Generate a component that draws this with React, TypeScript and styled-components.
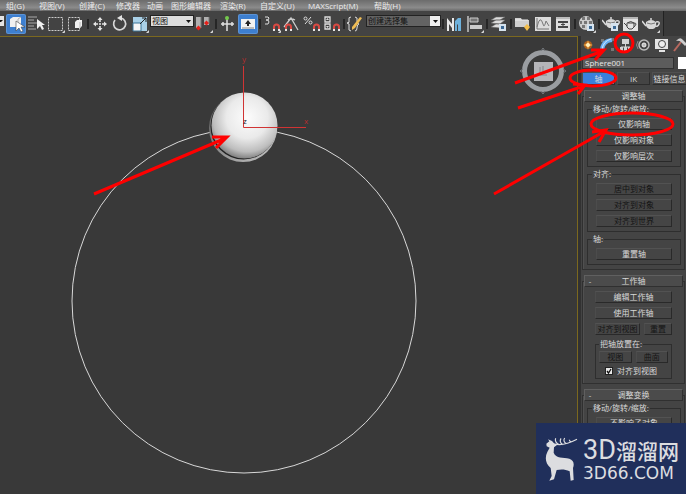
import React from "react";
import styled, { createGlobalStyle } from "styled-components";

const GlobalStyle = createGlobalStyle`
  *, *::before, *::after { box-sizing: border-box; }
  html, body { margin: 0; background: #393939; }
  body, button, input, select {
    font-family: "Open Sans", "Noto Sans CJK SC", sans-serif;
    font-size: 8px;
    line-height: 10px;
    color: #d8d8d8;
  }
  button { cursor: pointer; }
`;

const Page = styled.div`
  position: relative;
  display: flex;
  flex-direction: column;
  height: 100vh;
  overflow: hidden;
`;

const MenuBar = styled.nav`
  display: grid;
  grid-template-columns: 33px 40px 37px 31px 24px 49px 40px 48px 66px auto;
  justify-content: start;
  height: 11px;
  flex: none;
  padding-left: 6px;
  background: linear-gradient(#6c6c6c, #8b8b8b 70%, #686868);
`;

const MenuItem = styled.button`
  padding: 0;
  border: 0;
  background: none;
  color: #ececec;
  text-align: left;
  white-space: nowrap;
`;

const ToolBar = styled.div`
  display: flex;
  align-items: center;
  align-self: flex-start;
  flex: none;
  height: 25px;
  padding-right: 2px;
  background: #434343;
  border-right: 1px solid #222;
`;

const Tool = styled.button<{ $active?: boolean }>`
  display: flex;
  align-items: center;
  justify-content: center;
  width: 20px;
  height: 20px;
  padding: 0;
  border: 0;
  background: none;
  svg {
    border-radius: 1px;
    background: ${(p) => (p.$active ? "#3d7fd0" : "none")};
    box-shadow: ${(p) => (p.$active ? "0 0 0 1px #5b92d4" : "none")};
  }
`;

const Separator = styled.span`
  width: 2px;
  height: 10px;
  margin: 0 1px;
  background: #262626;
`;

const Picker = styled.label<{ $wide?: boolean }>`
  display: flex;
  position: relative;
  width: ${(p) => (p.$wide ? 75 : 44)}px;
  height: 12px;
  margin-bottom: 5px;
  border: 1px solid #222;
  background: ${(p) => (p.$wide ? "#636363" : "#dcdcdc")};
  select {
    appearance: none;
    width: 100%;
    padding: 0 11px 0 1px;
    border: 0;
    background: none;
    color: #111;
  }
  svg { position: absolute; right: 0; top: 0; pointer-events: none; }
`;

const PickerEdge = styled.span`
  display: flex;
  width: 6px;
  height: 12px;
  margin-bottom: 5px;
`;

const Main = styled.main`
  display: flex;
  flex: 1;
  min-height: 0;
`;

const Viewport = styled.section`
  position: relative;
  flex: 1;
  min-width: 0;
  border: solid #7b681f;
  border-width: 1px 1px 0 0;
  background: #393939;
  overflow: hidden;
`;

const Scene = styled.svg`
  display: block;
`;

const ViewCube = styled.svg`
  position: absolute;
  top: 8px;
  right: 8px;
`;

const Panel = styled.aside`
  flex: 0 0 108px;
  padding: 0 0 0 1px;
  border-left: 3px solid #323232;
  background: #444;
  overflow: hidden;
`;

const PanelTabs = styled.div`
  display: flex;
  height: 18px;
  gap: 2px;
`;

const PanelTab = styled.button`
  flex: none;
  width: 16px;
  height: 18px;
  padding: 0;
  border: 0;
  background: none;
`;

const NameRow = styled.div`
  display: flex;
  gap: 4px;
  margin-top: 3px;
  height: 12px;
`;

const NameInput = styled.input`
  width: 92px;
  padding: 0 2px;
  border: 1px solid #303030;
  background: #5c5c5c;
  color: #e8e8e8;
`;

const Swatch = styled.button`
  flex: 1;
  padding: 0;
  border: 0;
  background: #fff;
`;

const SubTabs = styled.div`
  display: grid;
  grid-template-columns: 33px 33px 1fr;
  gap: 2px;
  margin-top: 3px;
`;

const SubTab = styled.button<{ $active?: boolean }>`
  height: 13px;
  padding: 0;
  border: 1px solid;
  border-color: #505050 #2d2d2d #2d2d2d #505050;
  background: ${(p) => (p.$active ? "#3a80db" : "#444")};
  white-space: nowrap;
  &:last-child { border-right: 0; }
`;

const Rollout = styled.section`
  margin: 11px 1px 0 0;
  padding-bottom: 4px;
  border: 1px solid #303030;
  box-shadow: inset 1px 0 #505050;
`;

const RolloutHeader = styled.button`
  display: grid;
  grid-template-columns: 8px 1fr 8px;
  align-items: center;
  width: calc(100% - 2px);
  height: 12px;
  margin: -7px 1px 0;
  padding: 0 1px;
  border: 1px solid;
  border-color: #606060 #303030 #303030 #606060;
  background: #4b4b4b;
`;

const RolloutBody = styled.div<{ $inset?: boolean }>`
  display: flex;
  flex-direction: column;
  gap: ${(p) => (p.$inset ? 4 : 2)}px;
  padding: ${(p) => (p.$inset ? "4px 12px 0" : "2px 3px 0 4px")};
`;

const Group = styled.fieldset<{ $tight?: boolean }>`
  display: flex;
  flex-direction: column;
  gap: ${(p) => (p.$tight ? 3 : 4)}px;
  min-width: 0;
  margin: 0;
  padding: ${(p) => (p.$tight ? "2px 3px" : "4px 8px")};
  border: 1px solid #2e2e2e;
  legend {
    height: 10px;
    margin-left: ${(p) => (p.$tight ? 0 : -4)}px;
    padding: 0 1px;
    white-space: nowrap;
  }
`;

const Row = styled.div`
  display: flex;
  gap: 4px;
`;

const PushButton = styled.button<{ $grow?: number }>`
  display: flex;
  align-items: center;
  justify-content: center;
  flex: ${(p) => (p.$grow ? `${p.$grow} 1 0` : "none")};
  height: 12px;
  padding: 0;
  border: 1px solid;
  border-color: #525252 #292929 #292929 #4c4c4c;
  background: #454545;
  white-space: nowrap;
  &:disabled { color: #141414; }
`;

const Check = styled.label`
  display: flex;
  align-items: center;
  gap: 4px;
  height: 10px;
  padding-left: 6px;
  white-space: nowrap;
  span { position: relative; display: flex; }
  input {
    appearance: none;
    width: 8px;
    height: 8px;
    margin: 0;
    border: 1px solid #222;
    background: #e8e8e8;
  }
  svg { position: absolute; left: 0; top: 0; display: none; pointer-events: none; }
  input:checked + svg { display: block; }
`;

const Annotations = styled.svg`
  position: absolute;
  top: 0;
  right: 0;
  pointer-events: none;
`;

const Brand = styled.div`
  position: absolute;
  right: 0;
  bottom: 0;
  display: flex;
  align-items: center;
  gap: 4px;
  width: 150px;
  height: 71px;
  padding-left: 9px;
  background: #202f5b;
  color: #dcdde0;
`;

const BrandText = styled.div`
  display: flex;
  flex-direction: column;
  white-space: nowrap;
`;

const BrandName = styled.div`
  display: flex;
  align-items: center;
  height: 28px;
  font: 500 21px/28px "Noto Sans CJK SC", sans-serif;
  b { font: 400 27px/28px Roboto, sans-serif; }
`;

const BrandSite = styled.div`
  font: 400 17px/18px "DejaVu Sans", sans-serif;
`;

const menus = ["组(G)", "视图(V)", "创建(C)", "修改器", "动画", "图形编辑器", "渲染(R)", "自定义(U)", "MAXScript(M)", "帮助(H)"];

const Magnet = () => (
  <g fill="none" strokeWidth="2">
    <path d="M12 16v-3a2.5 2.5 0 0 1 5 0v3" stroke="#d84a43" />
    <path d="M12 15v2M17 15v2" stroke="#e6e6e6" />
  </g>
);

const Corner = () => <path d="M19 16v3h-3z" fill="#ddd" />;

const Teapot = () => (
  <>
    <path d="M5 9Q10 5 15 9Q16 15 12 16H8Q4 14 5 9Z" fill="#d9d9d9" />
    <path d="M5 13L1 8M15 9q4-1 3 2t-4 2M9 6h2" fill="none" stroke="#d9d9d9" strokeWidth="1.5" />
    <path d="M6 10q4 2 8 0" stroke="#777" fill="none" />
  </>
);

const icons: Record<string, React.ReactNode> = {
  select: (<><path d="M4 5l3-2h8v8l-3 2H4z" fill="#f0f0f0" /><path d="M12 5v8M12 5l3-2" stroke="#b4b4b4" /><path d="M10 7v10l3-3 2 4 2-1-2-4h4z" fill="#fff" stroke="#444" strokeWidth=".6" /></>),
  byName: (<><path d="M2 3h9M2 6h6M2 9h9M2 12h6M2 15h8" stroke="#aaa" strokeWidth="1.2" /><path d="M11 5v10l3-3 2 4 2-1-2-4h3z" fill="#f1f1f1" /></>),
  region: (<><rect x="2.5" y="3.5" width="14" height="13" fill="none" stroke="#ccc" strokeDasharray="2 1" /><Corner /></>),
  window: (<><rect x="2.5" y="3.5" width="11" height="13" fill="none" stroke="#ccc" strokeDasharray="2 1" /><path d="M9 8l2-2h5v6l-2 2H9z" fill="#f1f1f1" /><path d="M14 8v6" stroke="#bbb" /></>),
  move: (<><path d="M10 4v4M10 12v4M4 10h4M12 10h4M9 10h2" fill="none" stroke="#e4e4e4" strokeWidth="1.6" /><path d="M7.5 6L10 3l2.500 3zM7.500 14l2.500 3 2.500-3zM6 7.500L3 10l3 2.500zM14 7.500l3 2.500-3 2.500z" fill="#e4e4e4" /></>),
  rotate: (<><path d="M5 6a6 6 0 1 0 6-2" fill="none" stroke="#d6d6d6" strokeWidth="1.7" /><path d="M12 1v6L7 4z" fill="#e4e4e4" /></>),
  scale: (<><path d="M3 3h14v14H3z" fill="#a9d0e7" /><path d="M3 9h8v8H3z" fill="#f5f5f5" stroke="#3b7597" /><path d="M10 10l6-6M12 4h4v4" fill="none" stroke="#222" /><Corner /></>),
  pivot: (<><path d="M2 3h5v11H2zM10 3h5v8h-5z" fill="#b0b0b0" /><path d="M7 3v11M15 3v7" stroke="#777" /><path d="M2 14l2.500-2.500L7 14l-2.500 2.500zM10 9l2.500-2.500L15 9l-2.500 2.500z" fill="#e7201a" /><Corner /></>),
  manipulate: (<><path d="M9 5v12M3 10h13M5 8v4M14 8v4" stroke="#e0e0e0" strokeWidth="1.5" /><circle cx="9" cy="4" r="2" fill="#74c94c" /></>),
  keyboard: (<><path d="M3 5h14v10H3z" fill="#f2f2f2" /><path d="M10 6l3 4h-2v2H9v-2H7z" fill="#222" /><path d="M4 14h12" stroke="#888" /></>),
  snap: (<><path d="M3 3h3l1 1-1 2H4h2l1 2-1 2H3" fill="none" stroke="#ddd" /><Magnet /><Corner /></>),
  angle: (<><path d="M2 13L9 4l7 12M6 6a7 7 0 0 1 7 0" fill="none" stroke="#ccc" strokeWidth="1.3" /><g transform="translate(-8 0)"><Magnet /></g></>),
  percent: (<><circle cx="3.5" cy="4.5" r="1.5" fill="none" stroke="#ddd" /><circle cx="8.5" cy="8.5" r="1.5" fill="none" stroke="#ddd" /><path d="M9 3L3 10" stroke="#ddd" /><Magnet /></>),
  spinner: (<><path d="M3 3h5v5H3zM3 10h5v5H3z" fill="none" stroke="#ddd" strokeWidth="1.3" /><path d="M4 6l1.5-2L7 6zM4 12h3l-1.5 2z" fill="#ddd" /><Magnet /></>),
  sets: (<><path d="M5 3q-3 0-2 3t-2 3q3 0 2 4t2 4M9 3q3 0 2 4 0 3 2 3-2 0-2 4 0 3-2 3" fill="none" stroke="#ddd" /><path d="M6 13l8-10 2 1-7 10-3 2z" fill="#efbd55" /></>),
  mirror: (<><path d="M2 4l5 6V4h2v13H7v-3L4 10v7H2z" fill="#e8e8e8" /><path d="M10 17V7l3-3h3v13h-3v-7l-1 1v6z" fill="#6fb2dc" /></>),
  align: (<><path d="M3 2v16" stroke="#d9d9d9" strokeWidth="1.3" /><path d="M5 4h8v4H5z" fill="#777" stroke="#ccc" /><path d="M5 11h12v4H5z" fill="#ccc" /><Corner /></>),
  layers: (<><path d="M2 13l5-3h9l-5 4zM2 9l5-3h9l-5 4zM2 6l5-3h9l-5 3z" fill="#ddd" stroke="#666" strokeWidth=".6" /><path d="M10 10h7v7h-7z" fill="#d6e3ee" /><path d="M12 12h3v3h-3z" fill="#3d6994" /></>),
  ribbon: (<><path d="M2 4h6l1 2h7v7H2z" fill="#cfcfcf" /><path d="M2 6h13" stroke="#eee" /><path d="M11 13l3-3 3 3-3 4z" fill="#f2bd4b" /></>),
  curve: (<><path d="M2 3h16v14H2z" fill="#dcdcdc" /><path d="M4 4v11h12M4 13q3-13 6-3 1 5 3-3l3 5" fill="none" stroke="#777" /></>),
  schematic: (<><path d="M3 3h14v14H3z" fill="#ddd" /><path d="M3 4h14" stroke="#999" /><path d="M5 7h10v2H5zM5 12h10v2H5z" fill="#444" /><path d="M10 8v5M8 10.500h4" fill="none" stroke="#444" /></>),
  material: (<><circle cx="9" cy="9" r="7" fill="#ccc" /><path d="M5 3h3v3H5zM10 3h3v3h-3zM3 7h2v3H3zM7 7h3v3H7zM12 7h3v3h-3zM5 11h3v3H5z" fill="#777" /><path d="M10 10h7v7h-7z" fill="#d6e3ee" /><path d="M12 12h3v3h-3z" fill="#3d6994" /><Corner /></>),
  renderSetup: (<><g transform="translate(0 -2)"><Teapot /></g><path d="M10 9h7v8h-7z" fill="#d6e3ee" /><path d="M12 12h3v3h-3z" fill="#3d6994" /></>),
  frame: (<><path d="M2 3h15v14H2z" fill="#e2e2e2" /><path d="M2 4h15" stroke="#888" /><path d="M6 9q4-3 7 0v4l-2 2H8q-3-1-2-6zM6 12L3 9M13 9q4 0 0 4M7 9h6" fill="none" stroke="#444" /></>),
  render: (<><g transform="translate(0 -1)"><Teapot /></g><Corner /></>),
};

const Icon = ({ name }: { name: string }) => (
  <svg width="18" height="18" viewBox="1 1 18 18" aria-hidden="true">{icons[name]}</svg>
);

const snapGroups: string[][] = [
  ["manipulate", "keyboard"],
  ["snap", "angle", "percent", "spinner"],
];

const renderGroups: string[][] = [
  ["mirror", "align"],
  ["layers"],
  ["ribbon", "curve", "schematic"],
  ["material"],
  ["renderSetup", "frame", "render"],
];

const ToolSet = ({ names, active }: { names: string[]; active?: string }) => (
  <>
    {names.map((n) => (
      <Tool key={n} aria-label={n} $active={n === active}><Icon name={n} /></Tool>
    ))}
  </>
);

const DropArrow = ({ boxed }: { boxed?: boolean }) => (
  <svg width="10" height="10" viewBox="0 0 10 10" aria-hidden="true">
    {boxed && <path d="M0 0h10v10H0z" fill="#eee" />}
    <path d="M3 4h5L5.5 7z" fill="#111" />
  </svg>
);

const panelIcons: [string, React.ReactNode][] = [
  ["Create", <><circle cx="6" cy="9" r="4" fill="#ae611d" /><path d="M6 4l1 4 4 1-4 1-1 4-1-4-4-1 4-1z" fill="#ffbd54" /><circle cx="6" cy="9" r="2" fill="#fff0bc" /></>],
  ["Modify", <><path d="M1 3h3v3H1zM11 2h3v3h-3zM1 12h3v3H1zM11 12h3v3h-3z" fill="#777" /><path d="M2 15Q2 5 12 4" fill="none" stroke="#69b0f3" strokeWidth="4" /><path d="M2 14Q3 5 11 3" fill="none" stroke="#d3eaff" /></>],
  ["Hierarchy", <><path d="M4 3h7v5H4zM2 11h3v4H2zM6 11h3v4H6zM10 11h3v4h-3z" fill="#d2d2d2" /><path d="M7.5 8v4M3 11h9" stroke="#d2d2d2" /></>],
  ["Motion", <><circle cx="8" cy="9" r="5" fill="none" stroke="#bbb" strokeWidth="1.5" /><circle cx="8" cy="9" r="2" fill="#bbb" stroke="#eee" /><path d="M2 5q-3 4 0 8" fill="none" stroke="#888" /></>],
  ["Display", <><path d="M1 3h13v10H1zM5 14h6v2H5z" fill="#e4e4e4" /><circle cx="8" cy="8" r="3.5" fill="#eee" stroke="#444" /></>],
  ["Utilities", <><path d="M2 15L9 6" stroke="#b8685e" strokeWidth="2" /><path d="M4 5q4-5 7-1l4 4-2 2-4-4q-2-2-5-1z" fill="#ccc" /></>],
];

const RolloutBox = ({ title, inset, children }: { title: string; inset?: boolean; children: React.ReactNode }) => (
  <Rollout>
    <RolloutHeader aria-expanded="true"><span>-</span><span>{title}</span></RolloutHeader>
    <RolloutBody $inset={inset}>{children}</RolloutBody>
  </Rollout>
);

export default function App() {
  return (
    <Page>
      <GlobalStyle />
      <MenuBar>
        {menus.map((m) => <MenuItem key={m}>{m}</MenuItem>)}
      </MenuBar>
      <ToolBar role="toolbar">
        <PickerEdge>
          <svg width="5" height="12" aria-hidden="true"><path d="M0 1h4v10H0z" fill="#e4e4e4" /><path d="M0 5h3L1 7H0z" fill="#111" /></svg>
        </PickerEdge>
        <ToolSet names={["select", "byName", "region", "window"]} active="select" />
        <Separator />
        <ToolSet names={["move", "rotate", "scale"]} />
        <Picker>
          <select aria-label="参考坐标系"><option>视图</option></select>
          <DropArrow />
        </Picker>
        <ToolSet names={["pivot"]} />
        {snapGroups.map((names) => (
          <React.Fragment key={names[0]}>
            <Separator />
            <ToolSet names={names} active="keyboard" />
          </React.Fragment>
        ))}
        <Separator />
        <ToolSet names={["sets"]} />
        <Picker $wide>
          <select aria-label="选择集"><option>创建选择集</option></select>
          <DropArrow boxed />
        </Picker>
        {renderGroups.map((names) => (
          <React.Fragment key={names[0]}>
            <Separator />
            <ToolSet names={names} />
          </React.Fragment>
        ))}
      </ToolBar>

      <Main>
        <Viewport>
          <Scene width="500" height="457" viewBox="0 37 500 457">
            <defs>
              <radialGradient id="ball" cx=".54" cy=".38" r=".63">
                <stop offset="0" stopColor="#fcfcfc" />
                <stop offset=".5" stopColor="#eaeaea" />
                <stop offset=".82" stopColor="#bdbdbd" />
                <stop offset="1" stopColor="#7d7d7d" />
              </radialGradient>
              <linearGradient id="rim" x1="0" y1="0" x2="1" y2="1">
                <stop offset="0" stopColor="#555" />
                <stop offset="1" stopColor="#c8c8c8" />
              </linearGradient>
            </defs>
            <circle cx="244" cy="301" r="172" fill="none" stroke="#d8d8d8" />
            <circle cx="243" cy="128" r="34" fill="url(#rim)" />
            <circle cx="243.500" cy="126.500" r="33" fill="#222" />
            <circle cx="244.500" cy="125.500" r="33" fill="url(#ball)" />
            <path d="M243.500 66v61.500H306" fill="none" stroke="#d03434" />
            <g fontFamily="Open Sans, sans-serif" fontSize="8" fill="#b52e2e">
              <text x="242" y="62">y</text>
              <text x="304" y="124">x</text>
              <text x="243" y="124" fill="#222">z</text>
            </g>
            <path d="M94 194L226 138M212 137L227 137L216 148" fill="none" stroke="#f00" strokeWidth="3" />
          </Scene>
          <ViewCube width="52" height="52" viewBox="517 45 52 52" aria-label="ViewCube">
            <circle cx="543" cy="71" r="18.500" fill="none" stroke="#9a9da1" strokeWidth="5" />
            <path d="M534 62h19v19h-19z" fill="#b5b5b9" />
            <path d="M540 67v8h7M543 66v6h5" fill="none" stroke="#85858b" />
            <path d="M541 51l2-3 2 3M541 91l2 3 2-3M523 69l-3 2 3 2M563 69l3 2-3 2" fill="none" stroke="#777b80" />
          </ViewCube>
        </Viewport>

        <Panel>
          <PanelTabs>
            {panelIcons.map(([label, art]) => (
              <PanelTab key={label} aria-label={label}><svg width="16" height="18" aria-hidden="true">{art}</svg></PanelTab>
            ))}
          </PanelTabs>
          <NameRow>
            <NameInput aria-label="对象名称" defaultValue="Sphere001" />
            <Swatch aria-label="对象颜色" />
          </NameRow>
          <SubTabs>
            <SubTab $active>轴</SubTab>
            <SubTab>IK</SubTab>
            <SubTab>链接信息</SubTab>
          </SubTabs>

          <RolloutBox title="调整轴">
            <Group>
              <legend>移动/旋转/缩放:</legend>
              <PushButton>仅影响轴</PushButton>
              <PushButton>仅影响对象</PushButton>
              <PushButton>仅影响层次</PushButton>
            </Group>
            <Group>
              <legend>对齐:</legend>
              <PushButton disabled>居中到对象</PushButton>
              <PushButton disabled>对齐到对象</PushButton>
              <PushButton disabled>对齐到世界</PushButton>
            </Group>
            <Group>
              <legend>轴:</legend>
              <PushButton>重置轴</PushButton>
            </Group>
          </RolloutBox>

          <RolloutBox title="工作轴" inset>
            <PushButton>编辑工作轴</PushButton>
            <PushButton>使用工作轴</PushButton>
            <Row>
              <PushButton $grow={5} disabled>对齐到视图</PushButton>
              <PushButton $grow={3} disabled>重置</PushButton>
            </Row>
            <Group $tight>
              <legend>把轴放置在:</legend>
              <Row>
                <PushButton $grow={1} disabled>视图</PushButton>
                <PushButton $grow={1} disabled>曲面</PushButton>
              </Row>
              <Check>
                <span>
                  <input type="checkbox" defaultChecked />
                  <svg width="8" height="8" aria-hidden="true"><path d="M2 4l1.500 2L6 2" fill="none" stroke="#111" strokeWidth="1.300" /></svg>
                </span>
                对齐到视图
              </Check>
            </Group>
          </RolloutBox>

          <RolloutBox title="调整变换">
            <Group>
              <legend>移动/旋转/缩放:</legend>
              <PushButton>不影响子对象</PushButton>
            </Group>
          </RolloutBox>
        </Panel>
      </Main>

      <Annotations width="200" height="210" viewBox="486 0 200 210" aria-hidden="true">
        <g fill="none" stroke="#f00" strokeWidth="3">
          <path d="M515 83L603 51M591 50L604 50L595 60" />
          <path d="M518 108L584 86M573 84L585 85L578 94" />
          <path d="M494 194L605 131M592 132L606 130L599 142" />
          <circle cx="624" cy="43" r="9" />
          <ellipse cx="593" cy="78" rx="23" ry="8" />
          <ellipse cx="632" cy="124" rx="41" ry="11" />
        </g>
      </Annotations>

      <Brand>
        <svg width="34" height="46" viewBox="45 168 102 138" aria-hidden="true">
          <path d="M49 191L58 184L54 178L66 183L72 190L82 194L72 202L71 218C78 236 100 232 118 236C130 240 134 250 129 264L131 300L122 302L119 274C104 266 90 268 80 270L72 298L58 302L65 288L62 264C46 250 44 232 52 216L59 203L50 199Z" fill="#dcdde0" />
          <path d="M74 192C95 198 118 190 141 178M88 194C78 190 74 182 77 175M98 194C90 188 90 180 93 175M110 191C101 187 100 180 104 174M124 186Q118 184 118 179" fill="none" stroke="#dcdde0" strokeWidth="3.500" />
        </svg>
        <BrandText>
          <BrandName><b>3D</b>溜溜网</BrandName>
          <BrandSite>3D66.COM</BrandSite>
        </BrandText>
      </Brand>
    </Page>
  );
}
